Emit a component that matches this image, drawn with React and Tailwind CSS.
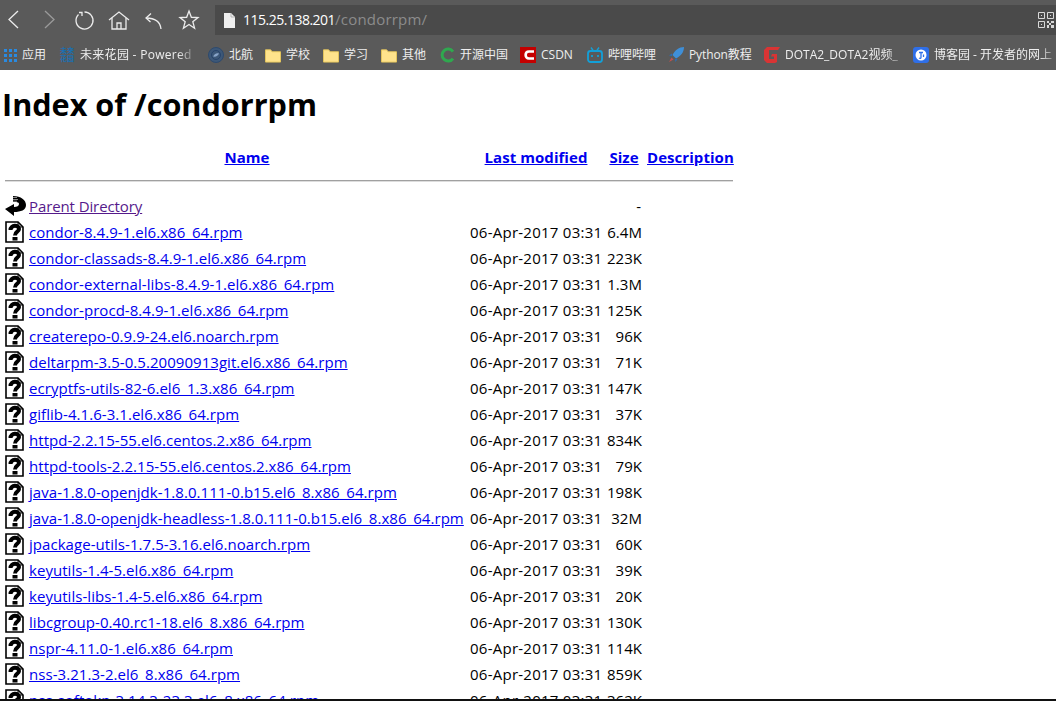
import React from 'react';

const files = [
  ['condor-8.4.9-1.el6.x86_64.rpm', '6.4M'],
  ['condor-classads-8.4.9-1.el6.x86_64.rpm', '223K'],
  ['condor-external-libs-8.4.9-1.el6.x86_64.rpm', '1.3M'],
  ['condor-procd-8.4.9-1.el6.x86_64.rpm', '125K'],
  ['createrepo-0.9.9-24.el6.noarch.rpm', '96K'],
  ['deltarpm-3.5-0.5.20090913git.el6.x86_64.rpm', '71K'],
  ['ecryptfs-utils-82-6.el6_1.3.x86_64.rpm', '147K'],
  ['giflib-4.1.6-3.1.el6.x86_64.rpm', '37K'],
  ['httpd-2.2.15-55.el6.centos.2.x86_64.rpm', '834K'],
  ['httpd-tools-2.2.15-55.el6.centos.2.x86_64.rpm', '79K'],
  ['java-1.8.0-openjdk-1.8.0.111-0.b15.el6_8.x86_64.rpm', '198K'],
  ['java-1.8.0-openjdk-headless-1.8.0.111-0.b15.el6_8.x86_64.rpm', '32M'],
  ['jpackage-utils-1.7.5-3.16.el6.noarch.rpm', '60K'],
  ['keyutils-1.4-5.el6.x86_64.rpm', '39K'],
  ['keyutils-libs-1.4-5.el6.x86_64.rpm', '20K'],
  ['libcgroup-0.40.rc1-18.el6_8.x86_64.rpm', '130K'],
  ['nspr-4.11.0-1.el6.x86_64.rpm', '114K'],
  ['nss-3.21.3-2.el6_8.x86_64.rpm', '859K'],
  ['nss-softokn-3.14.3-23.3.el6_8.x86_64.rpm', '362K'],
];

const UnknownIcon = () => (
  <svg width="20" height="22" viewBox="0 0 20 22" className="block ml-[2px]">
    <path d="M1 1H13L18 6V21H1Z" fill="#fff" stroke="#000" strokeWidth="1.600" />
    <path d="M13 1V6H18" fill="none" stroke="#000" />
    <path d="M5.500 9C5.500 3.500 14 3.500 14 8C14 11 10 10.500 10 14.500" fill="none" stroke="#000" strokeWidth="4" />
    <rect x="7.500" y="16" width="5" height="3.500" fill="#000" />
  </svg>
);

const BackIcon = () => (
  <svg width="21" height="20" viewBox="0 0 21 20" className="block ml-[2px]">
    <path d="M8 0C16 0 21 4 21 9C21 14 16 16 9 16V20L0 13L9 8V11C12 11 14 10 14 8C14 6 11 6 8 6Z" fill="#000" />
    <path d="M8 1.500H12M8 3.500H13M8 5.200H12" stroke="#aaa" strokeWidth="0.800" />
  </svg>
);

const NavIcon = ({ children, className }) => (
  <svg width="30" height="30" viewBox="0 0 30 30" fill="none" stroke="currentColor" strokeWidth="1.300" className={`shrink-0 ${className}`}>
    {children}
  </svg>
);

const Folder = () => (
  <svg width="17" height="15" viewBox="0 0 17 15">
    <path d="M0.500 1.500V14.500H16.500V3.500H7.500L6 1.500Z" fill="#ffe38c" stroke="#e6c65c" />
  </svg>
);

const AppsIcon = () => (
  <div className="grid grid-cols-3 gap-[2px] w-[13px]">
    {Array.from({ length: 9 }).map((_, i) => (
      <span key={i} className="w-[3px] h-[3px] bg-[#2a8ae0]" />
    ))}
  </div>
);

const Bookmark = ({ icon, label, className, textClass }) => (
  <div className={`flex items-center gap-[5px] whitespace-nowrap shrink-0 ${className}`}>
    <span className="w-[16px] h-[16px] flex items-center justify-center shrink-0 overflow-visible">{icon}</span>
    <span className={textClass}>{label}</span>
  </div>
);

const fade = '[mask-image:linear-gradient(to_right,black_88%,rgba(0,0,0,0.35))] overflow-hidden';

const App = () => {
  return (
    <div className="h-[701px] overflow-hidden flex flex-col bg-white text-black font-['Open_Sans','Noto_Sans_CJK_SC',sans-serif] border-b-2 border-[#111]">
      <div className="bg-[#5a5a5a] h-[70px] shrink-0">
        <div className="flex items-start h-[40px] pt-[5px] text-[#ececec]">
          <div className="flex w-[216px] shrink-0 ml-[-1px]">
            <NavIcon><path d="M19 6L10 14.500L19 23" /></NavIcon>
            <NavIcon className="ml-[5px] text-[#9a9a9a]"><path d="M11 6L20 14.500L11 23" /></NavIcon>
            <NavIcon className="ml-[5px]">
              <path d="M15.500 7A8.500 8.500 0 1 1 9.500 9.500" />
              <path d="M10 7.500H13V11" />
            </NavIcon>
            <NavIcon className="ml-[5px]">
              <path d="M5 15L15 7L25 15" />
              <path d="M8 13V24H22V13M13 24V18H17V24" />
            </NavIcon>
            <NavIcon className="ml-[4px]">
              <path d="M8 13C15 13 22 15 23 24" />
              <path d="M13 8.500L8 13L12.500 17" />
            </NavIcon>
            <NavIcon className="ml-[4px]">
              <path d="M17 6L19.350 12.260L26 12.600L20.800 16.700L22.600 23.200L17 19.500L11.400 23.200L13.200 16.700L8 12.600L14.650 12.260Z" />
            </NavIcon>
          </div>
          <div className="flex-1 h-[30px] bg-[#4a4a4a] flex items-center pl-[9px] pr-[2px]">
            <svg width="11" height="15" viewBox="0 0 11 15" className="mr-[8px] shrink-0">
              <path d="M0 0H7L11 4V15H0Z" fill="#efefef" />
              <path d="M7 0V4H11" fill="none" stroke="#aaa" strokeWidth="0.800" />
            </svg>
            <span className="text-white text-[14px] tracking-[-0.5px] mt-[-2px]">115.25.138.201</span>
            <span className="text-[#8c8c8c] text-[15px] tracking-[0.2px] mt-[-2px]">/condorrpm/</span>
            <svg width="16" height="16" viewBox="0 0 16 16" className="ml-auto shrink-0 text-[#d8d8d8]" fill="none" stroke="currentColor">
              <path d="M0.500 0.500H6.500V6.500H0.500ZM9.500 0.500H15.500V6.500H9.500ZM0.500 9.500H6.500V15.500H0.500Z" />
              <path d="M3 3H4V4H3ZM12 3H13V4H12ZM3 12H4V13H3ZM9 9H11V11H9ZM13 9H16V11H13ZM11 11H13V13H11ZM9 13H11V16H9ZM13 13H16V16H13Z" fill="currentColor" stroke="none" />
            </svg>
          </div>
        </div>
        <div className="flex items-center h-[30px] pl-[2px] text-[12px] text-[#eeeeee]">
          <Bookmark className="w-[57px] !gap-[4px]" icon={<AppsIcon />} label="应用" />
          <Bookmark className="w-[149px] ml-[0px]" textClass={`w-[111px] tracking-[0.3px] ${fade}`}
            icon={<span className="text-[#1a6fb0] text-[7px] font-bold leading-[8px] text-center w-[16px] block">未来<br />花园</span>}
            label="未来花园 - Powered" />
          <Bookmark className="w-[57px]" label="北航"
            icon={
              <svg width="16" height="16" viewBox="0 0 16 16">
                <circle cx="8" cy="8" r="7.500" fill="#3d5878" stroke="#2e4a6e" />
                <circle cx="8" cy="8" r="4.500" fill="none" stroke="#26436b" />
                <path d="M5 9.500C7 6 9 6 11 6.500C10 9 8 10 5 9.500Z" fill="#88a4c8" />
              </svg>
            } />
          <Bookmark className="w-[58px]" icon={<Folder />} label="学校" />
          <Bookmark className="w-[58px]" icon={<Folder />} label="学习" />
          <Bookmark className="w-[59px]" icon={<Folder />} label="其他" />
          <Bookmark className="w-[80px] !gap-[4px]" label="开源中国"
            icon={
              <svg width="16" height="16" viewBox="0 0 16 16" fill="none">
                <path d="M13 4.500A6 6 0 1 0 13 11.500" stroke="#2fa84f" strokeWidth="3" />
              </svg>
            } />
          <Bookmark className="w-[67px]" label="CSDN"
            icon={
              <svg width="16" height="16" viewBox="0 0 16 16">
                <rect width="16" height="16" fill="#c40000" />
                <path d="M14 4.500H9C4.500 4.500 4.500 11.500 9 11.500H14" fill="none" stroke="#fff" strokeWidth="2.600" />
              </svg>
            } />
          <Bookmark className="w-[81px]" label="哔哩哔哩"
            icon={
              <svg width="16" height="16" viewBox="0 0 16 16" fill="none" stroke="#12a0d8" strokeWidth="1.800">
                <rect x="1" y="4" width="14" height="11" rx="2.500" />
                <path d="M4 0.500L6.500 4M12 0.500L9.500 4" strokeWidth="1.400" />
                <path d="M5 8V10M11 8V10" />
              </svg>
            } />
          <Bookmark className="w-[96px]" label="Python教程" textClass="tracking-[-0.1px]"
            icon={
              <svg width="16" height="16" viewBox="0 0 16 16">
                <path d="M16 0C11 0 7 3 4.500 8L8 11.500C13 9 16 5 16 0Z" fill="#3f8fd8" />
                <path d="M4 6.500L1 8.500L4 9ZM9.500 12L7.500 15L7 12Z" fill="#2a6fb8" />
                <path d="M3.500 10.500L1 15L5.500 12.500Z" fill="#c0504d" />
              </svg>
            } />
          <Bookmark className="w-[149px]" label="DOTA2_DOTA2视频_" textClass={`w-[115px] ${fade}`}
            icon={
              <svg width="16" height="16" viewBox="0 0 16 16">
                <path d="M3 0H16L14 3H5V12H10V9.500H7L8 7H13V15L11 16H3L0 13V3Z" fill="#d93434" />
              </svg>
            } />
          <Bookmark className="w-[143px]" label="博客园 - 开发者的网上" textClass={`w-[119px] ${fade}`}
            icon={
              <svg width="16" height="16" viewBox="0 0 16 16">
                <rect width="16" height="16" rx="3" fill="#2f6fe8" />
                <circle cx="8" cy="8" r="5.500" fill="#fff" />
                <path d="M6 5.500H10M8 5.500V10.500C8 11.500 7 11.500 6 11M10.500 7.500V10" fill="none" stroke="#2f6fe8" strokeWidth="1.300" />
              </svg>
            } />
        </div>
      </div>

      <div className="pl-[3px] text-[15px] tracking-[0.05px]">
        <h1 className="text-[30.600px] tracking-normal font-bold leading-[36px] mt-[16px] mb-[23px] ml-[-1px]">Index of /condorrpm</h1>
        <table className="table-fixed border-collapse w-[730px] whitespace-nowrap">
          <colgroup>
            <col className="w-[26px]" />
            <col className="w-[441px]" />
            <col className="w-[132px]" />
            <col className="w-[40px]" />
            <col className="w-[91px]" />
          </colgroup>
          <thead>
            <tr className="h-[24px]">
              <th colSpan={2} className="p-0 pl-[21px] text-center font-bold"><a href="#" className="text-[#0000ee] underline">Name</a></th>
              <th className="p-0 text-center font-bold"><a href="#" className="text-[#0000ee] underline">Last modified</a></th>
              <th className="p-0 pl-[4px] text-center font-bold"><a href="#" className="text-[#0000ee] underline">Size</a></th>
              <th className="p-0 pl-[5px] text-center font-bold"><a href="#" className="text-[#0000ee] underline">Description</a></th>
            </tr>
            <tr>
              <th colSpan={5} className="p-0 pl-[2px] pt-[11px] pb-[11px] font-normal">
                <hr className="border-0 h-[2px] bg-[linear-gradient(#a0a0a0_50%,#dddddd_50%)]" />
              </th>
            </tr>
          </thead>
          <tbody>
            <tr className="h-[26px]">
              <td className="p-0"><BackIcon /></td>
              <td className="p-0"><a href="#" className="text-[#551a8b] underline tracking-[-0.1px]">Parent Directory</a></td>
              <td className="p-0" />
              <td className="p-0 text-right pr-[1px]">-</td>
              <td className="p-0" />
            </tr>
            {files.map(([name, size]) => (
              <tr key={name} className="h-[26px]">
                <td className="p-0"><UnknownIcon /></td>
                <td className="p-0"><a href="#" className="text-[#0000ee] underline">{name}</a></td>
                <td className="p-0 text-right tracking-[0.25px]">06-Apr-2017 03:31</td>
                <td className="p-0 text-right">{size}</td>
                <td className="p-0" />
              </tr>
            ))}
          </tbody>
        </table>
      </div>
    </div>
  );
};

export default App;
